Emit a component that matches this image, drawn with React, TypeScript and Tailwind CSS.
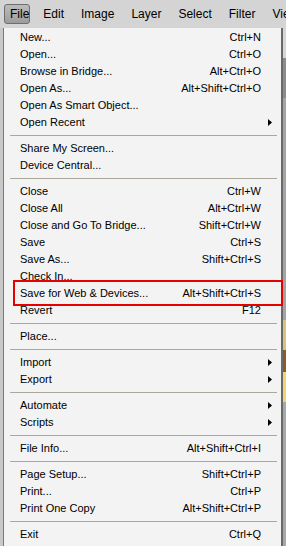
import React from "react";

type Item = { label: string; keys?: string; sub?: boolean } | "sep";

const items: Item[] = [
  { label: "New...", keys: "Ctrl+N" },
  { label: "Open...", keys: "Ctrl+O" },
  { label: "Browse in Bridge...", keys: "Alt+Ctrl+O" },
  { label: "Open As...", keys: "Alt+Shift+Ctrl+O" },
  { label: "Open As Smart Object..." },
  { label: "Open Recent", sub: true },
  "sep",
  { label: "Share My Screen..." },
  { label: "Device Central..." },
  "sep",
  { label: "Close", keys: "Ctrl+W" },
  { label: "Close All", keys: "Alt+Ctrl+W" },
  { label: "Close and Go To Bridge...", keys: "Shift+Ctrl+W" },
  { label: "Save", keys: "Ctrl+S" },
  { label: "Save As...", keys: "Shift+Ctrl+S" },
  { label: "Check In..." },
  { label: "Save for Web & Devices...", keys: "Alt+Shift+Ctrl+S" },
  { label: "Revert", keys: "F12" },
  "sep",
  { label: "Place..." },
  "sep",
  { label: "Import", sub: true },
  { label: "Export", sub: true },
  "sep",
  { label: "Automate", sub: true },
  { label: "Scripts", sub: true },
  "sep",
  { label: "File Info...", keys: "Alt+Shift+Ctrl+I" },
  "sep",
  { label: "Page Setup...", keys: "Shift+Ctrl+P" },
  { label: "Print...", keys: "Ctrl+P" },
  { label: "Print One Copy", keys: "Alt+Shift+Ctrl+P" },
  "sep",
  { label: "Exit", keys: "Ctrl+Q" },
];

const bar = ["Edit", "Image", "Layer", "Select", "Filter", "View"];

export default function App() {
  return (
    <div className="w-[286px] h-[546px] overflow-hidden bg-[#d4d4d4] text-black font-['Liberation_Sans',Arial,sans-serif]">
      {/* menu bar */}
      <div className="h-[28px] flex items-start pt-[4px] pl-[4px] text-[12px] whitespace-nowrap">
        <div className="h-[20px] w-[33px] pl-[5px] flex items-center rounded-[3px] border border-[#6e6e6e] bg-gradient-to-b from-[#bcbcbc] to-[#9c9c9c]">
          File
        </div>
        <div className="flex gap-[17px] pl-[13px] h-[20px] items-center">
          {bar.map((b) => (
            <span key={b}>{b}</span>
          ))}
        </div>
      </div>

      <div className="flex h-[518px]">
        <div className="w-[4px] flex">
          <div className="w-[3px] bg-[#c9c9c9]" />
          <div className="w-[1px] bg-[#7a7a7a]" />
        </div>

        {/* dropdown */}
        <div className="relative w-[277px] bg-[#f3f3f3] pt-[1px] text-[11px]">
          {items.map((it, i) =>
            it === "sep" ? (
              <div key={i} className="h-[9px] flex items-center pl-[6px] pr-[4px]">
                <div className="h-[1px] w-full bg-[#aca899]" />
              </div>
            ) : (
              <div key={i} className="h-[17px] flex items-center pl-[16px] whitespace-nowrap">
                <span className="flex-1">{it.label}</span>
                {it.keys && <span>{it.keys}</span>}
                <span className="w-[20px] flex items-center pl-[7px]">
                  {it.sub && (
                    <svg width="4" height="7" viewBox="0 0 4 7">
                      <path d="M0 0 L4 3.5 L0 7 Z" fill="#000" />
                    </svg>
                  )}
                </span>
              </div>
            )
          )}
          {/* red highlight box */}
          <div className="absolute left-[9px] top-[252px] w-[270px] h-[26px] border-2 border-[#e60000]" />
        </div>

        <div className="flex-1 flex">
          <div className="w-[2px] bg-[#6a6a6a]" />
          <div className="flex-1 flex flex-col">
            <div className="h-[30px] bg-[#d6d6d6]" />
            <div className="h-[40px] bg-[#8c8c8c]" />
            <div className="h-[222px] bg-[#a4a4a4]" />
            <div className="h-[30px] bg-[#d9c27a]" />
            <div className="h-[22px] bg-[#8a5a2a]" />
            <div className="h-[30px] bg-[#f2d66a]" />
            <div className="flex-1 bg-[#a8a8a8]" />
          </div>
        </div>
      </div>
    </div>
  );
}
